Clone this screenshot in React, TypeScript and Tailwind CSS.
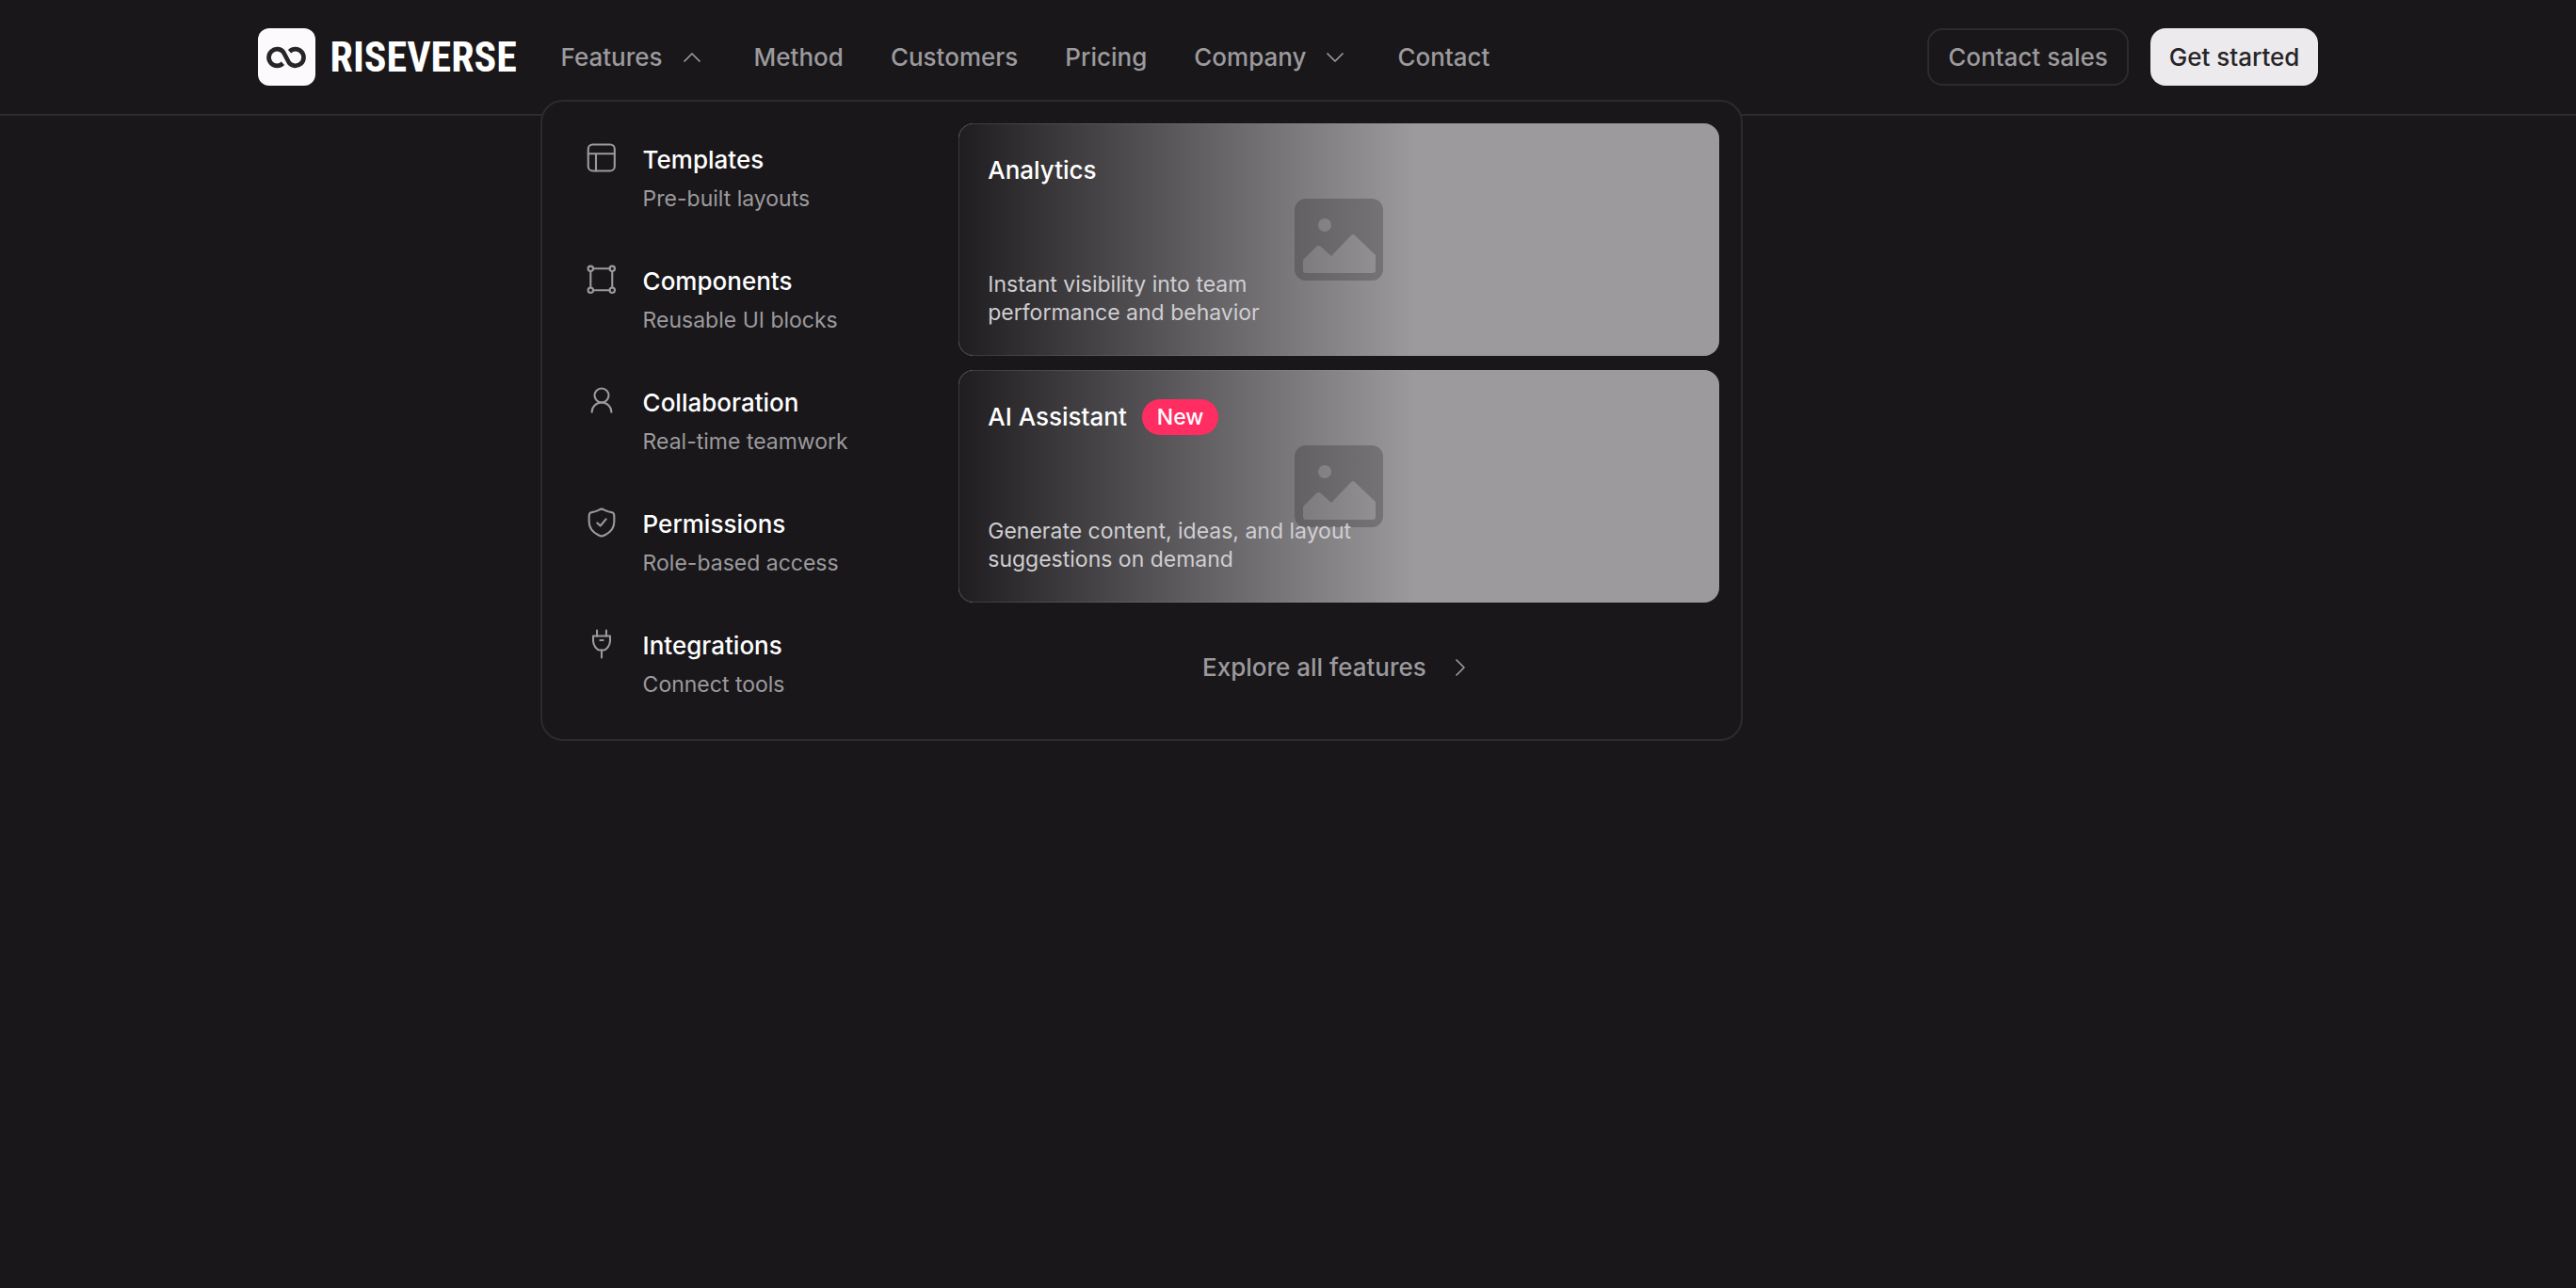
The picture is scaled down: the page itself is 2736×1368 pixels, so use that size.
import type { ReactNode } from 'react';

interface Feature {
  title: string;
  description: string;
  icon: ReactNode;
}

interface Highlight {
  title: string;
  lines: [string, string];
  badge?: string;
}

const features: Feature[] = [
  {
    title: 'Templates',
    description: 'Pre-built layouts',
    icon: (
      <>
        <rect x="2.5" y="2.3" width="18.7" height="18.7" rx="3.2" />
        <path d="M2.5 8.8h18.7M8 8.8v12.2" />
      </>
    ),
  },
  {
    title: 'Components',
    description: 'Reusable UI blocks',
    icon: (
      <>
        <circle cx="4.2" cy="4.2" r="1.8" />
        <circle cx="19.5" cy="4.2" r="1.8" />
        <circle cx="4.2" cy="19.5" r="1.8" />
        <circle cx="19.5" cy="19.5" r="1.8" />
        <path d="M6 4.2h11.7M6 19.5h11.7M4.2 6v11.7M19.5 6v11.7" />
      </>
    ),
  },
  {
    title: 'Collaboration',
    description: 'Real-time teamwork',
    icon: (
      <>
        <circle cx="12" cy="8" r="5" />
        <path d="M5.1 19.8v-.2a6.9 6.6 0 0 1 13.8 0v.2" />
      </>
    ),
  },
  {
    title: 'Permissions',
    description: 'Role-based access',
    icon: (
      <>
        <path d="M12 2.4c-1.1 0-2 .9-3.8 1.5C6.7 4.5 5 4.5 4 5.1c-1 .6-.9 1.6-.9 3.3v2.9c0 5 3.4 7.9 6.5 9.5.9.5 1.6.9 2.4.9s1.5-.4 2.4-.9c3.1-1.6 6.5-4.5 6.5-9.5V8.4c0-1.7.1-2.7-.9-3.3-1-.6-2.7-.6-4.2-1.2C14 3.3 13.1 2.4 12 2.4z" />
        <path d="M8.9 12.3l2.2 2 4-4.7" />
      </>
    ),
  },
  {
    title: 'Integrations',
    description: 'Connect tools',
    icon: (
      <>
        <path d="M6 6.3h12v3.5c0 3-2.6 6.5-4.7 6.5h-2.6C8.6 16.3 6 12.8 6 9.8z" />
        <path d="M8.7 2.3v4M15.3 2.3v4M12 16.3v5.3M10.9 9.3h2.2" />
      </>
    ),
  },
];

const highlights: Highlight[] = [
  {
    title: 'Analytics',
    lines: ['Instant visibility into team', 'performance and behavior'],
  },
  {
    title: 'AI Assistant',
    lines: ['Generate content, ideas, and layout', 'suggestions on demand'],
    badge: 'New',
  },
];

function Chevron({ direction }: { direction: 'up' | 'down' | 'right' }) {
  const paths = {
    up: 'M6 15l6-6 6 6',
    down: 'M6 9l6 6 6-6',
    right: 'M9 6l6 6-6 6',
  };
  return (
    <svg
      viewBox="0 0 24 24"
      className="size-8 fill-none stroke-current"
      strokeWidth="1.3"
      strokeLinecap="round"
      strokeLinejoin="round"
      aria-hidden="true"
    >
      <path d={paths[direction]} />
    </svg>
  );
}

function Logo() {
  return (
    <a href="#" className="flex items-center gap-4 text-white">
      <span className="flex size-[61px] shrink-0 items-center justify-center rounded-xl bg-[#fcfafd]">
        <svg
          viewBox="-1.5 -1 45.500 25.400"
          className="h-6 w-11 fill-none stroke-[#272528]"
          strokeWidth="5"
          strokeLinejoin="round"
          aria-hidden="true"
        >
          <path d="M17.5 18.3A9.3 9.3 0 1 1 18 5.6L24.5 17.8A9.3 9.3 0 1 0 25 5.1" />
        </svg>
      </span>
      <span className="font-['Roboto_Condensed','Noto_Sans_CJK_JP',sans-serif] text-[44px] leading-none font-bold">
        RISEVERSE
      </span>
    </a>
  );
}

function NavLink({ children }: { children: ReactNode }) {
  return (
    <li>
      <a href="#" className="flex h-[61px] items-center px-[22px]">
        {children}
      </a>
    </li>
  );
}

function FeatureItem({ title, description, icon }: Feature) {
  return (
    <li>
      <a href="#" className="flex gap-[26px] px-[22px] pt-[19px] pb-[17px]">
        <svg
          viewBox="0 0 24 24"
          className="size-9 fill-none stroke-[#9c9a9d]"
          strokeWidth="1.4"
          strokeLinecap="round"
          strokeLinejoin="round"
          aria-hidden="true"
        >
          {icon}
        </svg>
        <span className="flex flex-col gap-[3px]">
          <span className="text-[26px] leading-10 text-white">{title}</span>
          <span className="text-[23px] leading-9 font-normal text-[#9c9a9d]">{description}</span>
        </span>
      </a>
    </li>
  );
}

function HighlightCard({ title, lines, badge }: Highlight) {
  return (
    <a href="#" className="relative flex h-[247px] overflow-hidden rounded-2xl bg-[#9c9a9d]">
      <svg
        viewBox="0 0 94 87"
        className="absolute inset-0 m-auto h-[87px] w-[94px] fill-[#7b797c]"
        aria-hidden="true"
      >
        <path
          fillRule="evenodd"
          d="M12 0h70a12 12 0 0 1 12 12v63a12 12 0 0 1-12 12H12a12 12 0 0 1-12-12V12A12 12 0 0 1 12 0zM32 21a7 7 0 1 0 0 14 7 7 0 0 0 0-14zM9 65v11a3 3 0 0 0 3 3h71a3 3 0 0 0 3-3V60L64 39a3 3 0 0 0-4 0L39 61 28 51a4 4 0 0 0-5 0z"
        />
      </svg>
      <div className="absolute inset-0 rounded-2xl bg-linear-to-r from-[#1f1d20] to-transparent to-60% inset-ring inset-ring-[#9c9a9d]/20" />
      <div className="relative flex flex-col justify-between px-[31px] pt-8 pb-[31px]">
        <div className="flex h-9 items-center gap-4">
          <span className="text-[26px] leading-9 text-white">{title}</span>
          {badge && (
            <span className="rounded-full bg-[#ff2d62] px-4 text-[23px] leading-[38px] text-white">
              {badge}
            </span>
          )}
        </div>
        <p className="text-[23px] leading-[30px] font-normal text-[#d0ced1]">
          {lines[0]}
          <br />
          {lines[1]}
        </p>
      </div>
    </a>
  );
}

function FeaturesMenu() {
  return (
    <div className="absolute top-[76px] left-0 grid w-[1277px] grid-cols-[1fr_2fr] gap-4 rounded-3xl border-2 border-[#2d2b2e] bg-[#19171a] p-[23px]">
      <ul className="flex flex-col gap-[14px]">
        {features.map((feature) => (
          <FeatureItem key={feature.title} {...feature} />
        ))}
      </ul>
      <div className="flex flex-col gap-[15px]">
        {highlights.map((highlight) => (
          <HighlightCard key={highlight.title} {...highlight} />
        ))}
        <a href="#" className="flex flex-1 items-center justify-center gap-5">
          Explore all features
          <Chevron direction="right" />
        </a>
      </div>
    </div>
  );
}

export default function App() {
  return (
    <div className="min-h-screen bg-[#19171a] font-['Inter',sans-serif] text-[26px] leading-9 font-medium text-[#9c9a9d]">
      <header className="flex items-center justify-between border-b-2 border-[#2d2b2e] px-[10%] py-[30px]">
        <div className="flex items-center">
          <div className="w-[300px]">
            <Logo />
          </div>
          <nav>
            <ul className="flex items-center gap-[6px]">
              <li className="relative">
                <button
                  type="button"
                  aria-expanded="true"
                  className="flex h-[61px] items-center gap-[15px] px-[22px]"
                >
                  Features
                  <Chevron direction="up" />
                </button>
                <FeaturesMenu />
              </li>
              <NavLink>Method</NavLink>
              <NavLink>Customers</NavLink>
              <NavLink>Pricing</NavLink>
              <li>
                <button type="button" className="flex h-[61px] items-center gap-[15px] px-[22px]">
                  Company
                  <Chevron direction="down" />
                </button>
              </li>
              <NavLink>Contact</NavLink>
            </ul>
          </nav>
        </div>
        <div className="flex items-center gap-[23px]">
          <button
            type="button"
            className="h-[61px] rounded-2xl border-2 border-[#2d2b2e] px-5"
          >
            Contact sales
          </button>
          <button
            type="button"
            className="h-[61px] rounded-2xl bg-[#eceaed] px-5 text-[#272528]"
          >
            Get started
          </button>
        </div>
      </header>
    </div>
  );
}
